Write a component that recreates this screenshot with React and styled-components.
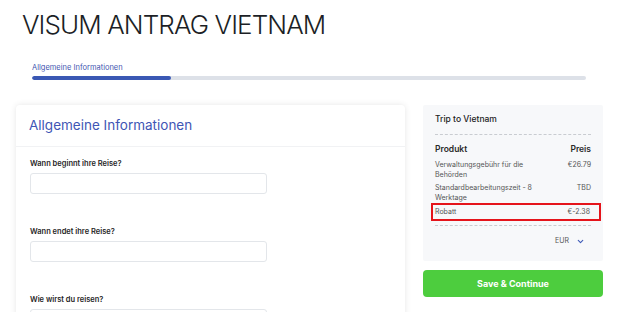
import React from 'react';
import styled, { createGlobalStyle } from 'styled-components';

const GlobalStyle = createGlobalStyle`
  body {
    margin: 0;
    background: #fff;
    font-family: Inter, "Open Sans", sans-serif;
    color: #222;
  }
  * { box-sizing: border-box; }
`;

const rows = [
  { name: ['Verwaltungsgebühr für die', 'Behörden'], price: '€26.79' },
  { name: ['Standardbearbeitungszeit - 8', 'Werktage'], price: 'TBD' },
];

function App() {
  return (
    <Page>
      <GlobalStyle />
      <Title>VISUM ANTRAG VIETNAM</Title>

      <Progress>
        <StepLabel>Allgemeine Informationen</StepLabel>
        <Track>
          <Fill style={{ width: '25%' }} />
        </Track>
      </Progress>

      <Columns>
        <Card>
          <CardHeader>Allgemeine Informationen</CardHeader>
          <CardBody>
            <Field>
              <Label>Wann beginnt ihre Reise?</Label>
              <Input />
            </Field>
            <Field>
              <Label>Wann endet ihre Reise?</Label>
              <Input />
            </Field>
            <Field>
              <Label>Wie wirst du reisen?</Label>
              <Input />
            </Field>
          </CardBody>
        </Card>

        <Side>
          <Summary>
            <TripTitle>Trip to Vietnam</TripTitle>
            <Dashed $top={9} $bottom={8} />
            <HeadRow>
              <span>Produkt</span>
              <span>Preis</span>
            </HeadRow>
            {rows.map((r) => (
              <Row key={r.price}>
                <span>
                  {r.name[0]}
                  <br />
                  {r.name[1]}
                </span>
                <span>{r.price}</span>
              </Row>
            ))}
            <Row $highlight>
              <span>Robatt</span>
              <span>€-2.38</span>
            </Row>
            <Dashed $top={4} $bottom={10} />
            <Currency>
              EUR
              <svg width="9" height="9" viewBox="0 0 24 24" fill="none" stroke="#3f5bb8" strokeWidth="3" strokeLinecap="round" strokeLinejoin="round">
                <path d="M6 9l6 6 6-6" />
              </svg>
            </Currency>
          </Summary>
          <SaveButton>Save &amp; Continue</SaveButton>
        </Side>
      </Columns>
    </Page>
  );
}

export default App;

const Page = styled.div`
  padding: 8px 16px 0 16px;
  width: 630px;
  height: 312px;
  overflow: hidden;
`;

const Title = styled.h1`
  margin: 0 0 0 6px;
  font-family: Inter, sans-serif;
  font-weight: 300;
  font-size: 26px;
  line-height: 34px;
  letter-spacing: -0.9px;
  color: #1c1f26;
`;

const Progress = styled.div`
  margin: 21px 0 0 16px;
  width: 554px;
`;

const StepLabel = styled.div`
  font-size: 7.5px;
  line-height: 10px;
  color: #3f56b0;
  margin-bottom: 3px;
`;

const Track = styled.div`
  height: 4px;
  border-radius: 2px;
  background: #dde1e8;
  overflow: hidden;
`;

const Fill = styled.div`
  height: 100%;
  border-radius: 2px;
  background: #3a58b4;
`;

const Columns = styled.div`
  display: flex;
  align-items: flex-start;
  gap: 18px;
  margin-top: 25px;
`;

const Card = styled.div`
  width: 389px;
  height: 260px;
  background: #fff;
  border-radius: 4px;
  box-shadow: 0 0 6px rgba(0, 0, 0, 0.1);
`;

const CardHeader = styled.div`
  height: 42px;
  padding: 12px 13px;
  font-size: 13.5px;
  font-weight: 400;
  color: #3f56b5;
  border-bottom: 1px solid #f1f2f4;
`;

const CardBody = styled.div`
  padding: 12px 14px;
  display: flex;
  flex-direction: column;
  gap: 33px;
`;

const Field = styled.div`
  display: flex;
  flex-direction: column;
  gap: 4px;
`;

const Label = styled.label`
  font-size: 7.5px;
  font-weight: 600;
  line-height: 10px;
  color: #1f1f1f;
`;

const Input = styled.div`
  width: 237px;
  height: 21px;
  border: 1px solid #e3e6ea;
  border-radius: 3px;
  background: #fff;
`;

const Side = styled.div`
  width: 180px;
  display: flex;
  flex-direction: column;
  gap: 9px;
`;

const Summary = styled.div`
  background: #f7f8fa;
  border-radius: 2px;
  padding: 8px 8px 0 8px;
  height: 156px;
`;

const TripTitle = styled.div`
  padding: 0 4px;
  font-size: 8.5px;
  line-height: 12px;
  font-weight: 500;
  color: #222;
`;

const Dashed = styled.div`
  margin: ${(p) => `${p.$top}px 4px ${p.$bottom}px 4px`};
  border-top: 1px dashed #c9ccd1;
`;

const HeadRow = styled.div`
  display: flex;
  justify-content: space-between;
  padding: 0 4px;
  font-size: 8.5px;
  font-weight: 600;
  line-height: 12px;
  color: #2a2a2a;
  margin-bottom: 5px;
`;

const Row = styled.div`
  display: flex;
  justify-content: space-between;
  align-items: flex-start;
  padding: ${(p) => (p.$highlight ? '2px 9px 2px 2px' : '0 4px')};
  margin: ${(p) => (p.$highlight ? '-3px -6px 0 0' : '0 0 3px 0')};
  border: ${(p) => (p.$highlight ? '2px solid #e5141b' : 'none')};
  font-size: 7px;
  line-height: 10px;
  color: #555;
`;

const Currency = styled.div`
  display: flex;
  justify-content: flex-end;
  align-items: center;
  gap: 7px;
  padding-right: 10px;
  font-size: 7px;
  line-height: 10px;
  color: #555;
`;

const SaveButton = styled.button`
  height: 27px;
  border: none;
  border-radius: 4px;
  background: #4dcd3e;
  color: #fff;
  font-family: Inter, sans-serif;
  font-size: 9px;
  font-weight: 700;
  cursor: pointer;
`;
